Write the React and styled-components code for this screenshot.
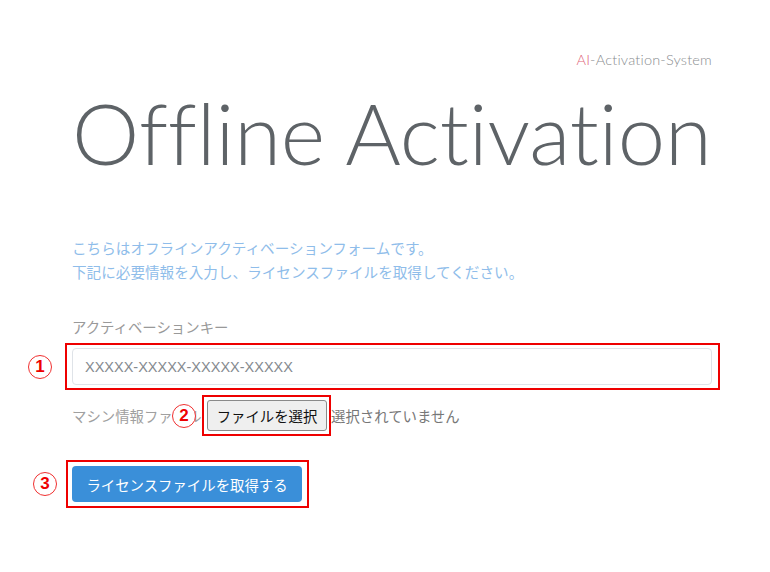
import styled, {createGlobalStyle} from 'styled-components';

const GlobalStyle = createGlobalStyle`
  body {
    margin: 0;
    background: #fff;
    font-family: "Noto Sans CJK JP", "Noto Sans", sans-serif;
  }
`;

const Page = styled.div`
  width: 640px;
  margin-left: 72px;
  padding: 50px 0 40px;
  display: flex;
  flex-direction: column;
  align-items: stretch;
`;

const Brand = styled.div`
  text-align: right;
  font-family: Lato, "Noto Sans", sans-serif;
  font-weight: 300;
  font-size: 14.5px;
  line-height: 20px;
  color: #8a8d90;
  letter-spacing: 0.2px;
  span {
    color: #e0677c;
  }
`;

const Title = styled.h1`
  margin: 12px 0 0 0;
  font-family: Lato, "Open Sans", sans-serif;
  font-weight: 300;
  font-size: 85px;
  line-height: 100px;
  color: #5e6367;
  white-space: nowrap;
  letter-spacing: -0.1px;
`;

const Lead = styled.p`
  margin: 54px 0 0 0;
  font-size: 14.6px;
  line-height: 24px;
  color: #8fbdea;
`;

const Label = styled.div`
  margin-top: 32px;
  font-size: 14.4px;
  line-height: 22px;
  color: #999;
`;

const Marked = styled.div`
  position: relative;
  display: flex;
  align-self: ${p => (p.$fit ? 'flex-start' : 'stretch')};
  margin-top: ${p => p.$top || 0}px;
`;

const Frame = styled.div`
  position: absolute;
  top: ${p => -p.$v}px;
  bottom: ${p => -p.$v}px;
  left: ${p => -p.$l}px;
  right: ${p => -p.$r}px;
  border: 2px solid #ee0000;
  pointer-events: none;
`;

const Num = styled.div`
  position: absolute;
  left: ${p => p.$left}px;
  top: 50%;
  transform: translateY(-50%);
  width: 22px;
  height: 22px;
  border-radius: 50%;
  border: 1px solid #f03030;
  background: #fff;
  color: #ee0000;
  font-family: "Liberation Sans", Arial, sans-serif;
  font-weight: bold;
  font-size: 17px;
  line-height: 22px;
  text-align: center;
  z-index: 2;
`;

const KeyInput = styled.input`
  box-sizing: border-box;
  width: 100%;
  height: 37px;
  border: 1px solid #dfe3e8;
  border-radius: 4px;
  padding: 0 12px;
  font-family: "Liberation Sans", Arial, sans-serif;
  font-size: 14.5px;
  color: #495057;
  outline: none;
  &::placeholder {
    color: #858a8f;
  }
`;

const FileRow = styled.div`
  margin-top: 15px;
  display: flex;
  align-items: center;
  font-size: 14.4px;
  color: #888;
  height: 31px;
`;

const FileLabel = styled.span`
  width: 135px;
  white-space: nowrap;
  overflow: hidden;
  color: #a0a0a0;
`;

const FileButton = styled.button`
  box-sizing: border-box;
  width: 120px;
  height: 31px;
  background: #efefef;
  border: 1px solid #8a8a8a;
  border-radius: 3px;
  font-family: "Noto Sans CJK JP", sans-serif;
  font-size: 14.4px;
  color: #111;
  padding: 0;
`;

const FileState = styled.span`
  margin-left: 4px;
  color: #777;
`;

const Submit = styled.button`
  box-sizing: border-box;
  width: 230px;
  height: 36px;
  background: #3a8fd9;
  border: none;
  border-radius: 4px;
  color: #fff;
  font-family: "Noto Sans CJK JP", sans-serif;
  font-size: 14.4px;
  padding: 0;
`;

const App = () => {
  return (
    <>
      <GlobalStyle />
      <Page>
        <Brand><span>AI</span>-Activation-System</Brand>
        <Title>Offline Activation</Title>
        <Lead>
          こちらはオフラインアクティベーションフォームです。<br />
          下記に必要情報を入力し、ライセンスファイルを取得してください。
        </Lead>
        <Label>アクティベーションキー</Label>
        <Marked $top={10}>
          <KeyInput placeholder="XXXXX-XXXXX-XXXXX-XXXXX" />
          <Frame $v={5} $l={7} $r={8} />
          <Num $left={-44}>1</Num>
        </Marked>
        <FileRow>
          <FileLabel>マシン情報ファイル</FileLabel>
          <Marked $fit>
            <FileButton type="button">ファイルを選択</FileButton>
            <Frame $v={5} $l={5} $r={4} />
            <Num $left={-35}>2</Num>
          </Marked>
          <FileState>選択されていません</FileState>
        </FileRow>
        <Marked $top={35} $fit>
          <Submit type="button">ライセンスファイルを取得する</Submit>
          <Frame $v={6} $l={6} $r={7} />
          <Num $left={-39}>3</Num>
        </Marked>
      </Page>
    </>
  );
};

export default App;
